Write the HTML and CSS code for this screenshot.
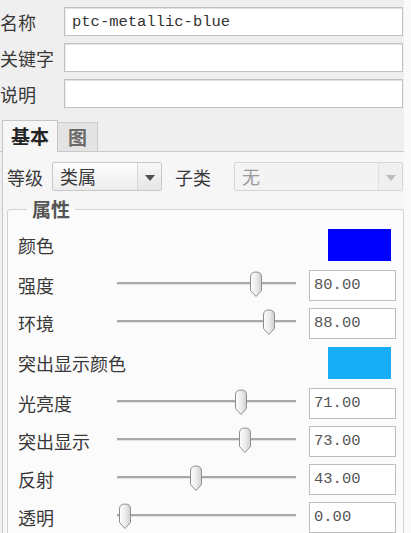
FILE: index.html
```html
<!DOCTYPE html>
<html lang="zh">
<head>
    <meta charset="UTF-8">
    <meta name="viewport" content="width=device-width, initial-scale=1.0">
    <title>外观编辑器</title>
    <link rel="stylesheet" href="styles.css">
</head>
<body>
    <div class="panel">
        <div class="field">
            <label>名称</label>
            <input class="text" type="text" value="ptc-metallic-blue">
        </div>
        <div class="field">
            <label>关键字</label>
            <input class="text" type="text">
        </div>
        <div class="field">
            <label>说明</label>
            <input class="text" type="text">
        </div>

        <div class="tabs">
            <div class="tab active">基本</div>
            <div class="tab">图</div>
        </div>

        <div class="tab-body">
            <div class="class-row">
                <span class="lbl">等级</span>
                <div class="select"><span>类属</span><i class="arrow"></i></div>
                <span class="lbl sub">子类</span>
                <div class="select wide disabled"><span>无</span><i class="arrow"></i></div>
            </div>

            <fieldset class="group">
                <legend>属性</legend>
                <div class="prop color-row">
                    <span>颜色</span>
                    <div class="swatch blue"></div>
                </div>
                <div class="prop">
                    <span>强度</span>
                    <div class="slider"><svg class="thumb" style="left: 132px" viewBox="0 0 14 26" width="14" height="26"><use href="#thumb"/></svg></div>
                    <input class="num" type="text" value="80.00">
                </div>
                <div class="prop">
                    <span>环境</span>
                    <div class="slider"><svg class="thumb" style="left: 145px" viewBox="0 0 14 26" width="14" height="26"><use href="#thumb"/></svg></div>
                    <input class="num" type="text" value="88.00">
                </div>
                <div class="prop color-row">
                    <span>突出显示颜色</span>
                    <div class="swatch cyan"></div>
                </div>
                <div class="prop">
                    <span>光亮度</span>
                    <div class="slider"><svg class="thumb" style="left: 117px" viewBox="0 0 14 26" width="14" height="26"><use href="#thumb"/></svg></div>
                    <input class="num" type="text" value="71.00">
                </div>
                <div class="prop">
                    <span>突出显示</span>
                    <div class="slider"><svg class="thumb" style="left: 121px" viewBox="0 0 14 26" width="14" height="26"><use href="#thumb"/></svg></div>
                    <input class="num" type="text" value="73.00">
                </div>
                <div class="prop">
                    <span>反射</span>
                    <div class="slider"><svg class="thumb" style="left: 72px" viewBox="0 0 14 26" width="14" height="26"><use href="#thumb"/></svg></div>
                    <input class="num" type="text" value="43.00">
                </div>
                <div class="prop">
                    <span>透明</span>
                    <div class="slider"><svg class="thumb" style="left: 1px" viewBox="0 0 14 26" width="14" height="26"><use href="#thumb"/></svg></div>
                    <input class="num" type="text" value="0.00">
                </div>
            </fieldset>
        </div>
    </div>

    <svg width="0" height="0" class="defs">
        <defs>
            <linearGradient id="thumb-fill" x1="0" y1="0" x2="1" y2="0">
                <stop offset="0" stop-color="#fdfdfd"/>
                <stop offset="0.5" stop-color="#eeeeee"/>
                <stop offset="1" stop-color="#cfcfcf"/>
            </linearGradient>
            <symbol id="thumb" viewBox="0 0 14 26">
                <path d="M1.5 6 Q1.5 1 7 1 Q12.5 1 12.5 6 L12.5 19.5 L7 25.5 L1.5 19.5 Z" fill="url(#thumb-fill)" stroke="#8e8e8e" stroke-width="1"/>
            </symbol>
        </defs>
    </svg>
</body>
</html>
```

FILE: styles.css
```css
body {
    margin: 0;
    background: #fafafa;
    font-family: "Noto Sans CJK SC", "Noto Sans", sans-serif;
    font-size: 18px;
    color: #383838;
}
.panel {
    width: 404px;
    height: 533px;
    overflow: hidden;
    box-sizing: border-box;
    padding-top: 7px;
    background: #efefef;
}
.field {
    display: grid;
    grid-template-columns: 64px 1fr;
    align-items: center;
    height: 29px;
    margin-bottom: 7px;
    padding-right: 1px;
}
.field label {
    line-height: 20px;
    white-space: nowrap;
}
.text {
    height: 29px;
    box-sizing: border-box;
    margin: 0;
    padding: 0 7px;
    border: 1px solid #c2c2c2;
    box-shadow: inset 0 1px 0 #e2e2e2, inset 1px 0 0 #ececec;
    background: #fff;
    font-family: "Liberation Mono", monospace;
    font-size: 15.5px;
    color: #333;
    outline: none;
}
.tabs {
    display: flex;
    align-items: flex-end;
    height: 37px;
    margin-top: -1px;
    border-bottom: 1px solid #c9c9c9;
}
.tab {
    box-sizing: border-box;
    height: 29px;
    width: 40px;
    line-height: 27px;
    text-align: center;
    font-size: 19px;
    font-weight: bold;
    color: #6a6a6a;
    background: #e4e4e4;
    border: 1px solid #cdcdcd;
    border-left: none;
    border-bottom: none;
}
.tab.active {
    height: 32px;
    width: 56px;
    margin-left: 2px;
    margin-bottom: -1px;
    line-height: 30px;
    color: #222;
    background: #f6f6f6;
    border: 1px solid #c4c4c4;
    border-bottom: none;
}
.tab-body {
    margin-left: 2px;
    padding: 10px 0 0 4px;
    height: 400px;
    background: #f6f6f6;
    border-left: 1px solid #c9c9c9;
}
.class-row {
    display: flex;
    align-items: center;
    height: 29px;
}
.lbl {
    width: 36px;
    margin-right: 9px;
    line-height: 20px;
    white-space: nowrap;
}
.lbl.sub {
    width: 37px;
    margin-left: 13px;
    margin-right: 22px;
}
.select {
    display: flex;
    box-sizing: border-box;
    width: 110px;
    height: 29px;
    border: 1px solid #c8c8c8;
    border-radius: 2px;
    background: linear-gradient(#fdfdfd, #ececec);
}
.select span {
    flex: 1;
    padding-left: 7px;
    line-height: 27px;
}
.select .arrow {
    width: 23px;
    border-left: 1px solid #d6d6d6;
    background: linear-gradient(#f7f7f7, #e6e6e6);
    position: relative;
}
.select .arrow::after {
    content: "";
    position: absolute;
    left: 7px;
    top: 12px;
    border-left: 5px solid transparent;
    border-right: 5px solid transparent;
    border-top: 6px solid #4f4f4f;
}
.select.wide {
    width: 169px;
}
.select.disabled {
    background: #f3f3f3;
    border-color: #d6d6d6;
}
.select.disabled span {
    color: #9a9a9a;
}
.select.disabled .arrow {
    background: #f0f0f0;
    border-left-color: #e0e0e0;
}
.select.disabled .arrow::after {
    border-top-color: #bcbcbc;
}
.group {
    margin: 8px 0 0 0;
    padding: 5px 0 0 10px;
    height: 400px;
    border: 1px solid #d2d2d2;
    border-radius: 3px;
    background: #fbfbfb;
}
.group legend {
    margin-left: 9px;
    padding: 0 5px;
    line-height: 20px;
    font-size: 19px;
    font-weight: bold;
    color: #555;
}
.prop {
    display: grid;
    grid-template-columns: 99px 179px 100px;
    align-items: center;
    height: 38px;
}
.prop > span {
    line-height: 20px;
    white-space: nowrap;
}
.color-row {
    display: flex;
    justify-content: space-between;
    height: 42px;
    padding-right: 12px;
}
.swatch {
    width: 63px;
    height: 32px;
}
.swatch.blue {
    background: #0000fe;
}
.swatch.cyan {
    background: #17aef6;
}
.slider {
    position: relative;
    height: 2px;
    margin-top: -3px;
    background: #a8a8a8;
    border-bottom: 1px solid #e2e2e2;
}
.thumb {
    position: absolute;
    top: -11px;
}
.num {
    height: 31px;
    width: 87px;
    box-sizing: border-box;
    margin: 0 0 0 13px;
    padding: 0 4px;
    border: 1px solid #bdbdbd;
    background: #fff;
    font-family: "Liberation Mono", monospace;
    font-size: 15.5px;
    color: #555;
    outline: none;
}
.defs {
    position: absolute;
}
```
